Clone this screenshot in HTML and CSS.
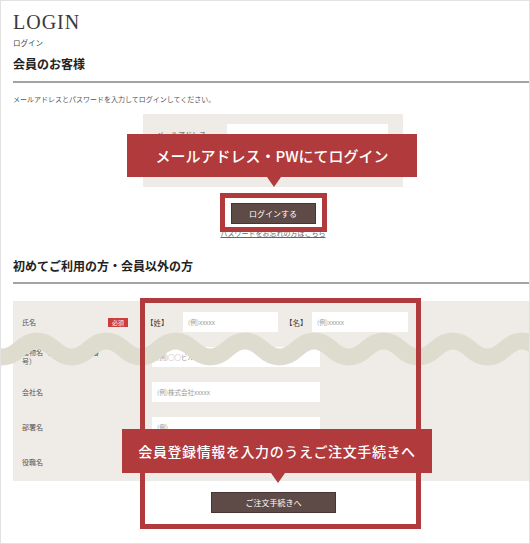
FILE: index.html
```html
<!DOCTYPE html>
<html lang="ja">
<head>
<meta charset="utf-8">
<title>LOGIN</title>
<link rel="stylesheet" href="styles.css">
</head>
<body>
<div class="page">
  <h1 class="title">LOGIN</h1>
  <p class="subtitle">ログイン</p>

  <h2 class="heading">会員のお客様</h2>
  <hr class="rule">
  <p class="desc">メールアドレスとパスワードを入力してログインしてください。</p>

  <div class="login-box">
    <div class="login-row"><span class="login-label">メールアドレス</span><span class="input"></span></div>
    <div class="login-row"><span class="login-label">パスワード</span><span class="input"></span></div>
  </div>
  <div class="login-actions">
    <button class="btn btn-login">ログインする</button>
    <a class="forgot">パスワードをお忘れの方はこちら</a>
  </div>

  <h2 class="heading heading-2">初めてご利用の方・会員以外の方</h2>
  <hr class="rule">

  <div class="form">
    <div class="form-row">
      <div class="form-label"><span>氏名</span><span class="badge">必須</span></div>
      <div class="form-field name-field">
        <span class="nm nm-first">【姓】</span><span class="input input-name">(例)xxxxx</span>
        <span class="nm nm-last">【名】</span><span class="input input-name2">(例)xxxxx</span>
      </div>
    </div>
    <div class="form-row">
      <div class="form-label"><span class="two-line">建物名（ビル名・部屋番号）</span></div>
      <div class="form-field"><span class="input input-wide">(例)○○ビル</span></div>
    </div>
    <div class="form-row">
      <div class="form-label"><span>会社名</span></div>
      <div class="form-field"><span class="input input-wide">(例)株式会社xxxxx</span></div>
    </div>
    <div class="form-row">
      <div class="form-label"><span>部署名</span></div>
      <div class="form-field"><span class="input input-wide">(例)</span></div>
    </div>
    <div class="form-row">
      <div class="form-label"><span>役職名</span></div>
      <div class="form-field"><span class="input input-wide">(例)</span></div>
    </div>
  </div>

  <div class="order-actions">
    <button class="btn btn-order">ご注文手続きへ</button>
  </div>

  <svg class="wave" width="532" height="44" viewBox="0 0 532 44" aria-hidden="true">
    <path d="M -49.63 24 Q -32.3 8 -14.98 24 T 19.67 24 T 54.32 24 T 88.97 24 T 123.62 24 T 158.27 24 T 192.92 24 T 227.57 24 T 262.22 24 T 296.87 24 T 331.52 24 T 366.17 24 T 400.82 24 T 435.47 24 T 470.12 24 T 504.77 24 T 539.42 24 T 574.07 24" fill="none" stroke="#dedbcf" stroke-width="17"/>
  </svg>

  <div class="highlight hl-login"></div>
  <div class="highlight hl-form"></div>

  <div class="callout callout-login">メールアドレス・PWにてログイン</div>
  <div class="callout callout-order">会員登録情報を入力のうえご注文手続きへ</div>
</div>
</body>
</html>
```

FILE: styles.css
```css
html, body {
  margin: 0;
  padding: 0;
  background: #ffffff;
}

.page {
  position: relative;
  box-sizing: border-box;
  width: 530px;
  height: 544px;
  border: 1px solid #e2e2e2;
  padding-left: 12px;
  overflow: hidden;
  font-family: "Noto Sans CJK JP", "Noto Sans", sans-serif;
  color: #333;
}

.title {
  margin: 11px 0 0;
  font-family: "Liberation Serif", serif;
  font-weight: normal;
  font-size: 20px;
  line-height: 20px;
  letter-spacing: 1px;
  color: #3a3a3a;
}

.subtitle {
  margin: 6px 0 0;
  font-size: 7.5px;
  line-height: 10px;
  color: #444;
}

.heading {
  margin: 9px 0 0;
  font-size: 12px;
  line-height: 14px;
  font-weight: bold;
  color: #222;
}

.heading-2 {
  margin-top: 21px;
}

.rule {
  margin: 10px 0 0;
  border: 0;
  border-top: 2px solid #a3a3a3;
  height: 0;
}

.heading-2 + .rule {
  margin-top: 9px;
}

.desc {
  margin: 12px 0 0;
  font-size: 7px;
  line-height: 9px;
  color: #555;
}

.login-box {
  box-sizing: border-box;
  margin: 10px 0 0 130px;
  width: 260px;
  height: 73px;
  padding: 10px 15px 0 14px;
  background: #efece7;
  display: flex;
  flex-direction: column;
  gap: 7px;
}

.login-row {
  display: flex;
  align-items: center;
  justify-content: space-between;
}

.login-label {
  font-size: 7px;
  color: #555;
}

.input {
  box-sizing: border-box;
  display: flex;
  align-items: center;
  height: 20px;
  padding-left: 5px;
  background: #ffffff;
  font-size: 6.5px;
  color: #9a9a9a;
}

.login-row .input {
  width: 161px;
}

.login-actions {
  margin: 16px 0 0 130px;
  width: 260px;
  display: flex;
  flex-direction: column;
  align-items: center;
}

.btn {
  box-sizing: border-box;
  border: 1px solid #463633;
  background: #5e4a46;
  color: #ffffff;
  font-family: "Noto Sans CJK JP", "Noto Sans", sans-serif;
  font-size: 8px;
  padding: 0;
  height: 21px;
}

.btn-login {
  width: 85px;
}

.forgot {
  margin-top: 5px;
  font-size: 7px;
  line-height: 9px;
  color: #666;
  text-decoration: underline;
}

.form {
  box-sizing: border-box;
  margin-top: 17px;
  height: 180px;
  padding: 11px 0 0 9px;
  background: #efece7;
  display: flex;
  flex-direction: column;
  gap: 15px;
}

.form-row {
  display: flex;
  align-items: center;
  height: 20px;
}

.form-label {
  width: 106px;
  display: flex;
  align-items: center;
  justify-content: space-between;
  font-size: 7px;
  line-height: 9px;
  color: #555;
}

.two-line {
  width: 78px;
}

.badge {
  width: 20px;
  height: 9px;
  background: #cc3e3c;
  color: #ffffff;
  font-size: 6px;
  line-height: 9px;
  text-align: center;
}

.form-field {
  margin-left: 24px;
  display: flex;
  align-items: center;
}

.name-field {
  margin-left: 18px;
}

.nm {
  font-size: 7.5px;
  color: #444;
}

.nm-first {
  width: 37px;
}

.nm-last {
  width: 27px;
  margin-left: 7px;
}

.input-name {
  width: 95px;
}

.input-name2 {
  width: 96px;
}

.input-wide {
  width: 168px;
}

.order-actions {
  margin-top: 11px;
  display: flex;
  padding-left: 198px;
}

.btn-order {
  width: 125px;
}

.wave {
  position: absolute;
  left: -1px;
  top: 324px;
  z-index: 1;
}

.highlight {
  position: absolute;
  box-sizing: border-box;
  border: 5px solid #b13a3c;
  z-index: 2;
}

.hl-login {
  left: 219px;
  top: 192px;
  width: 107px;
  height: 39px;
}

.hl-form {
  left: 139px;
  top: 297px;
  width: 281px;
  height: 231px;
}

.callout {
  position: absolute;
  z-index: 3;
  background: #b13a3c;
  color: #ffffff;
  display: flex;
  align-items: center;
  justify-content: center;
  font-weight: 500;
}

.callout::after {
  content: "";
  position: absolute;
  top: 100%;
  border-top: 10px solid #b13a3c;
  border-left: 7px solid transparent;
  border-right: 7px solid transparent;
}

.callout-login {
  left: 126px;
  top: 133px;
  width: 290px;
  height: 43px;
  font-size: 15px;
}

.callout-login::after {
  left: 140px;
}

.callout-order {
  left: 121px;
  top: 428px;
  width: 310px;
  height: 44px;
  font-size: 14px;
  letter-spacing: 0.6px;
}

.callout-order::after {
  left: 149px;
}
```
